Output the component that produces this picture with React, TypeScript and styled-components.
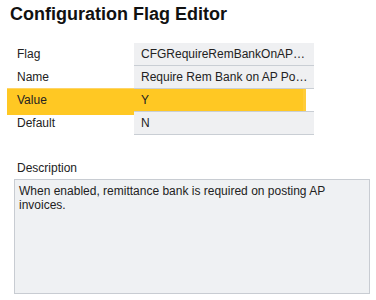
import React from "react";
import styled, { createGlobalStyle } from "styled-components";

const Global = createGlobalStyle`
  html, body { margin: 0; padding: 0; background: #ffffff; }
  body { font-family: "Liberation Sans", Arial, sans-serif; }
  * { box-sizing: border-box; }
`;

const Page = styled.div`
  padding: 3px 6px 0 10px;
  width: 376px;
  display: flex;
  flex-direction: column;
`;

const Title = styled.h1`
  margin: 0;
  font-size: 18px;
  line-height: 22px;
  font-weight: 700;
  color: #111111;
`;

const Table = styled.div`
  margin-top: 18px;
  display: flex;
  flex-direction: column;
  align-items: flex-start;
`;

const Row = styled.div<{ $highlight?: boolean }>`
  position: relative;
  display: grid;
  grid-template-columns: 124px 180px;
  width: 304px;
  ${(p) =>
    p.$highlight &&
    `
    &::before {
      content: "";
      position: absolute;
      left: -3px;
      right: 8px;
      top: -1px;
      bottom: -3px;
      background: rgba(255, 196, 18, 0.93);
      border-top: 1px solid rgba(255, 214, 110, 0.9);
      border-right: 3px solid rgba(255, 205, 60, 0.9);
      z-index: 0;
    }
  `}
`;

const Label = styled.div`
  position: relative;
  z-index: 1;
  padding-left: 7px;
  font-size: 12px;
  line-height: 22px;
  height: 23px;
  color: #222222;
`;

const Cell = styled.div<{ $plain?: boolean }>`
  position: relative;
  z-index: 1;
  height: 23px;
  padding: 0 5px 0 7px;
  font-size: 12px;
  line-height: 22px;
  color: #222222;
  background: ${(p) => (p.$plain ? "transparent" : "#eff0f2")};
  border-bottom: 1px solid #c9ced4;
  white-space: nowrap;
  overflow: hidden;
  text-overflow: ellipsis;
`;

const Section = styled.div`
  margin-top: 25px;
  margin-left: 4px;
  display: flex;
  flex-direction: column;
  gap: 3px;
`;

const SectionLabel = styled.div`
  padding-left: 3px;
  font-size: 12px;
  line-height: 16px;
  color: #222222;
`;

const TextArea = styled.textarea`
  width: 356px;
  height: 115px;
  margin: 0;
  padding: 4px 4px;
  border: 1px solid #c8ccd2;
  border-radius: 0;
  background: #eff1f3;
  font-family: "Liberation Sans", Arial, sans-serif;
  font-size: 12px;
  line-height: 14px;
  color: #222222;
  resize: none;
  outline: none;
  overflow: hidden;
`;

const rows = [
  { label: "Flag", value: "CFGRequireRemBankOnAPPosting" },
  { label: "Name", value: "Require Rem Bank on AP Posting" },
  { label: "Value", value: "Y", highlight: true },
  { label: "Default", value: "N" },
];

export default function App() {
  return (
    <>
      <Global />
      <Page>
        <Title>Configuration Flag Editor</Title>
        <Table>
          {rows.map((r) => (
            <Row key={r.label} $highlight={r.highlight}>
              <Label>{r.label}</Label>
              <Cell $plain={r.highlight}>{r.value}</Cell>
            </Row>
          ))}
        </Table>
        <Section>
          <SectionLabel>Description</SectionLabel>
          <TextArea
            readOnly
            value="When enabled, remittance bank is required on posting AP invoices."
          />
        </Section>
      </Page>
    </>
  );
}
